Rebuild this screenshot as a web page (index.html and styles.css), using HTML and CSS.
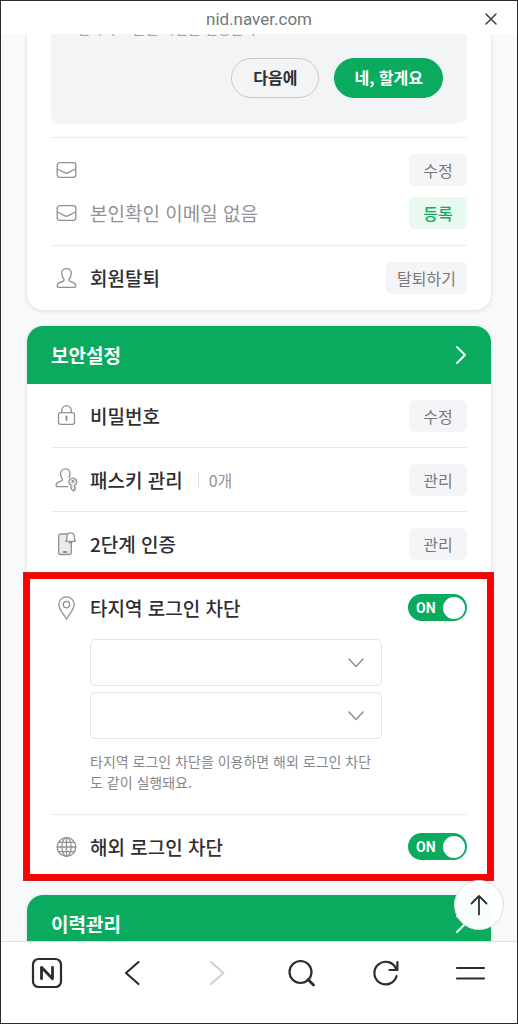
FILE: index.html
```html
<!DOCTYPE html>
<html lang="ko">
<head>
<meta charset="utf-8">
<meta name="viewport" content="width=device-width, initial-scale=1">
<title>네이버 보안설정</title>
<link rel="stylesheet" href="styles.css">
</head>
<body>
<svg class="sprite" aria-hidden="true">
  <symbol id="mail" viewBox="0 0 24 24"><rect x="2.7" y="4.7" width="18.6" height="14.6" rx="2.6"/><path d="M3 11l7.6 3.9q1.4.7 2.8 0L21 11"/></symbol>
  <symbol id="user" viewBox="0 0 24 24"><path d="M9.4 13.2C7.800 11.500 7.200 9.800 7.200 7.600 7.200 4.600 9.200 2.700 12 2.700s4.800 1.900 4.800 4.900c0 2.200-.6 3.900-2.200 5.600-.4 1.200.2 1.900 1.400 2.300 3.300.9 5.300 2.200 5.300 4.400 0 .9-.5 1.400-1.400 1.400H4.100c-.9 0-1.400-.5-1.400-1.400 0-2.200 2-3.500 5.300-4.400 1.200-.4 1.800-1.100 1.400-2.300z"/></symbol>
</svg>
<div class="browser">
  <header class="address">
    <span class="url">nid.naver.com</span>
    <button class="close" aria-label="닫기"><svg viewBox="0 0 14 14"><path d="M2 2l10 10M12 2L2 12"/></svg></button>
  </header>

  <main class="page">
    <section class="card account">
      <div class="body">
        <div class="prompt">
          <p class="prompt-text">연락처로 본인 확인을 설정할까요</p>
          <div class="prompt-actions">
            <button class="pill">다음에</button>
            <button class="pill primary">네, 할게요</button>
          </div>
        </div>
        <div class="mails">
          <div class="line">
            <svg class="icon"><use href="#mail"/></svg>
            <span class="name"></span>
            <button class="small">수정</button>
          </div>
          <div class="line">
            <svg class="icon"><use href="#mail"/></svg>
            <span class="name muted">본인확인 이메일 없음</span>
            <button class="small green">등록</button>
          </div>
        </div>
        <div class="row">
          <svg class="icon"><use href="#user"/></svg>
          <span class="name">회원탈퇴</span>
          <button class="small">탈퇴하기</button>
        </div>
      </div>
    </section>

    <section class="card">
      <a class="card-head" href="#security"><h2>보안설정</h2><svg class="chevron" viewBox="0 0 12 20"><path d="M2 2l8 8-8 8"/></svg></a>
      <div class="body" id="security">
        <div class="row first">
          <svg class="icon" viewBox="0 0 24 24"><rect x="4" y="8.700" width="16" height="11.600" rx="2"/><path d="M7.200 8.700V6.500a4.800 4.800 0 0 1 9.600 0v2.200"/><path class="thick" d="M12 12.500v3.500"/></svg>
          <span class="name">비밀번호</span>
          <button class="small">수정</button>
        </div>
        <div class="row">
          <svg class="icon" viewBox="0 0 24 24"><path d="M13.500 18.600H2.900c-.9 0-1.300-.5-1.300-1.300 0-2.100 1.800-3.300 4.600-4.200 1.600-.5 2.200-1.300 1.500-2.500C6.600 9.300 6.100 7.700 6.100 5.800c0-3 1.900-5 4.700-5s4.700 2 4.700 5c0 1.500-.3 2.700-1 3.900"/><path class="fill" d="M16.500 17.400a3.900 3.900 0 1 1 3.600 0v1.400l.8 1-.8 1 .4 1-1.300 1.200-1.500-1.200-1.200-1v-3.400z"/><circle cx="18.300" cy="13.300" r=".7"/></svg>
          <span class="name">패스키 관리</span>
          <span class="count">0개</span>
          <button class="small">관리</button>
        </div>
        <div class="row">
          <svg class="icon" viewBox="0 0 24 24"><rect class="fill" x="4.200" y="2" width="12.600" height="20.500" rx="2"/><path class="thick" d="M9.200 20h2.600"/><path class="paper" d="M11.400 9.300c.8-.8 1-1.700 1-4.200 0-2.600 1.500-4.200 3.700-4.200s3.700 1.600 3.700 4.200c0 2.500.2 3.400 1 4.200zM14.800 10.700h2.600"/></svg>
          <span class="name">2단계 인증</span>
          <button class="small">관리</button>
        </div>
        <div class="marked">
          <div class="row bare">
            <svg class="icon" viewBox="0 0 24 24"><path d="M12 23.200C8.500 17 4.300 13.400 4.300 8.600a7.700 7.700 0 0 1 15.400 0c0 4.800-4.200 8.400-7.700 14.600z"/><circle cx="12" cy="8.600" r="3.200"/></svg>
            <span class="name" id="region-label">타지역 로그인 차단</span>
            <label class="toggle"><span>ON</span><input type="checkbox" role="switch" aria-labelledby="region-label" checked></label>
          </div>
          <div class="detail">
            <div class="select"><select aria-label="지역 1"><option></option></select><svg viewBox="0 0 18 12"><path d="M2 2l7 7.500L16 2"/></svg></div>
            <div class="select"><select aria-label="지역 2"><option></option></select><svg viewBox="0 0 18 12"><path d="M2 2l7 7.500L16 2"/></svg></div>
            <p class="help">타지역 로그인 차단을 이용하면 해외 로그인 차단도 같이 실행돼요.</p>
          </div>
          <div class="row">
            <svg class="icon" viewBox="0 0 24 24"><circle cx="12" cy="12" r="9.300"/><ellipse cx="12" cy="12" rx="4.600" ry="9.300"/><path d="M12 2.700v18.600M2.700 12h18.600M4 7.400h16M4 16.600h16"/></svg>
            <span class="name" id="abroad-label">해외 로그인 차단</span>
            <label class="toggle"><span>ON</span><input type="checkbox" role="switch" aria-labelledby="abroad-label" checked></label>
          </div>
        </div>
      </div>
    </section>

    <section class="card">
      <a class="card-head" href="#history"><h2>이력관리</h2><svg class="chevron" viewBox="0 0 12 20"><path d="M2 2l8 8-8 8"/></svg></a>
    </section>

    <button class="to-top" aria-label="맨 위로"><svg viewBox="0 0 24 24"><path d="M12 21.500V3M4.500 10.500L12 3l7.500 7.500"/></svg></button>
  </main>

  <nav class="toolbar" aria-label="브라우저 도구">
    <button aria-label="네이버 홈"><svg viewBox="0 0 32 32"><rect x="2" y="2" width="28" height="28" rx="5.500"/><path class="bold" d="M10.500 21.700V10.300l11 11.400V10.300"/></svg></button>
    <button aria-label="뒤로"><svg viewBox="0 0 32 32"><path d="M22.500 5L10 16l12.500 11"/></svg></button>
    <button class="off" aria-label="앞으로" disabled><svg viewBox="0 0 32 32"><path d="M10 5l12.500 11L10 27"/></svg></button>
    <button aria-label="검색"><svg viewBox="0 0 32 32"><circle cx="15.500" cy="15" r="11"/><path class="bold" d="M23 22.500l5.500 5.500"/></svg></button>
    <button aria-label="새로고침"><svg viewBox="0 0 32 32"><path d="M26.600 19A11.300 11.300 0 1 1 26.200 12"/><path d="M27.400 5v8h-7.900"/></svg></button>
    <button aria-label="메뉴"><svg viewBox="0 0 32 32"><path d="M2 11h27M2 21.500h27"/></svg></button>
  </nav>
</div>
</body>
</html>
```
FILE: styles.css
```css
* { box-sizing: border-box; }

body {
  margin: 0;
  color: #2e2f32;
  font-family: "Noto Sans CJK KR", sans-serif;
  font-size: 19px;
}

button, select { font: inherit; color: inherit; border: 0; background: none; padding: 0; margin: 0; }
h2, p { margin: 0; }
svg { display: block; fill: none; stroke: currentColor; stroke-linecap: round; stroke-linejoin: round; }
.sprite { display: none; }

.browser {
  display: flex;
  flex-direction: column;
  height: 100vh;
  border: 1px solid #2c2c2e;
  background: #fff;
}

.address {
  flex: none;
  display: grid;
  grid-template-columns: 1fr auto 1fr;
  align-items: center;
  height: 33px;
  padding: 3px 19px 0;
}
.url {
  grid-column: 2;
  color: #737578;
  font: 17px/24px Roboto, sans-serif;
}
.close { grid-column: 3; justify-self: end; color: #3c3d40; }
.close svg { width: 14px; height: 14px; stroke-width: 1.5; }

.page {
  position: relative;
  flex: 1;
  min-height: 0;
  overflow: hidden;
  padding: 0 26px;
  background: #f8f9fb;
}

.card {
  margin-bottom: 16px;
  border-radius: 16px;
  background: #fff;
  box-shadow: 0 1px 4px rgba(30, 40, 60, 0.14);
}
.account { border-radius: 0 0 16px 16px; padding-bottom: 1px; }
.body { padding: 0 24px; }

.prompt {
  display: flow-root;
  height: 90px;
  padding: 0 24px;
  border-radius: 0 0 10px 10px;
  background: #f3f4f6;
}
/* scrolled almost entirely under the address bar */
.prompt-text {
  margin: -16px 0 20px;
  padding-left: 2px;
  color: #a0a2a5;
  font-size: 14px;
  line-height: 20px;
}
.prompt-actions { display: flex; justify-content: flex-end; gap: 15px; }
.pill {
  min-width: 88px;
  height: 40px;
  padding: 0 19px 2px;
  border: 1px solid #c9cacd;
  border-radius: 20px;
  font-size: 16px;
  font-weight: 700;
  line-height: 24px;
}
.pill.primary { border-color: #0bab5f; background: #0bab5f; color: #fff; }

.mails {
  display: grid;
  gap: 11px;
  margin-top: 13px;
  padding: 16px 0;
  border-top: 1px solid #e9eaec;
}
.line, .row { display: flex; align-items: center; gap: 8px; }
.row { height: 64px; border-top: 1px solid #e9eaec; }
.row.first { height: 63px; border-top: 0; }
.row.bare { border-top-color: transparent; }

.icon {
  flex: none;
  width: 31px;
  height: 24px;
  color: #8f9194;
  stroke-width: 1.3;
}
.icon .thick { stroke-width: 2; }
.icon .fill { fill: #ebebed; }
.icon .paper { fill: #fff; }

.name { font-weight: 500; line-height: 30px; }
.muted { color: #929396; font-weight: 400; }
.count {
  margin-left: 7px;
  padding-left: 10px;
  border-left: 1px solid #dedfe2;
  color: #929396;
  font-size: 16px;
  line-height: 16px;
}
.small {
  flex: none;
  min-width: 58px;
  height: 32px;
  margin-left: auto;
  padding: 0 11px;
  border-radius: 5px;
  background: #f5f5f8;
  color: #77797d;
  font-size: 16px;
  line-height: 24px;
}
.small.green { background: #e8faef; color: #0bab5f; font-weight: 500; }

.card-head {
  display: flex;
  align-items: center;
  justify-content: space-between;
  height: 58px;
  padding: 0 24px;
  border-radius: 16px 16px 0 0;
  background: #0bab5f;
  color: #fff;
  text-decoration: none;
}
.card-head h2 { font-size: 19px; line-height: 30px; font-weight: 700; }
.chevron { width: 12px; height: 20px; stroke-width: 2; }

.marked { position: relative; padding-bottom: 1px; }
.marked::after {
  content: "";
  position: absolute;
  inset: -3px -27px -2px -28px;
  border: 7px solid #fe0000;
  outline: 1px solid #c9211e;
  outline-offset: -1px;
  pointer-events: none;
}

.toggle {
  display: flex;
  align-items: center;
  justify-content: space-between;
  width: 59px;
  height: 27px;
  margin-left: auto;
  padding: 0 2px 0 8px;
  border-radius: 14px;
  background: #0bab5f;
  color: #fff;
  font: 700 14px/20px Roboto, sans-serif;
}
.toggle input {
  appearance: none;
  width: 22px;
  height: 22px;
  margin: 0;
  border-radius: 50%;
  background: #fff;
}

.detail { display: grid; gap: 6px; padding: 0 85px 21px 39px; }
.select { display: grid; align-items: center; }
.select > * { grid-area: 1 / 1; }
.select select {
  appearance: none;
  width: 100%;
  height: 47px;
  border: 1px solid #e3e5e8;
  border-radius: 5px;
  background: #fff;
}
.select svg {
  justify-self: end;
  width: 18px;
  height: 12px;
  margin-right: 17px;
  color: #929396;
  stroke-width: 1.6;
  pointer-events: none;
}
.help {
  margin-top: 6px;
  color: #85878b;
  font-size: 14px;
  line-height: 21px;
  word-break: break-all;
}

.to-top {
  position: absolute;
  right: 13px;
  bottom: 11px;
  display: grid;
  place-items: center;
  width: 50px;
  height: 50px;
  border: 1px solid #dcdee0;
  border-radius: 50%;
  background: rgba(255, 255, 255, 0.97);
}
.to-top svg { width: 24px; height: 24px; stroke-width: 1.8; }

.toolbar {
  flex: none;
  display: flex;
  justify-content: space-between;
  padding: 15px 30px 34px;
  border-top: 1px solid #dcdde0;
  background: #fff;
}
.toolbar button { color: #2b2c2f; }
.toolbar .off { color: #cfd0d2; }
.toolbar svg { width: 32px; height: 32px; stroke-width: 2.2; }
.toolbar .bold { stroke-width: 2.8; }
```
